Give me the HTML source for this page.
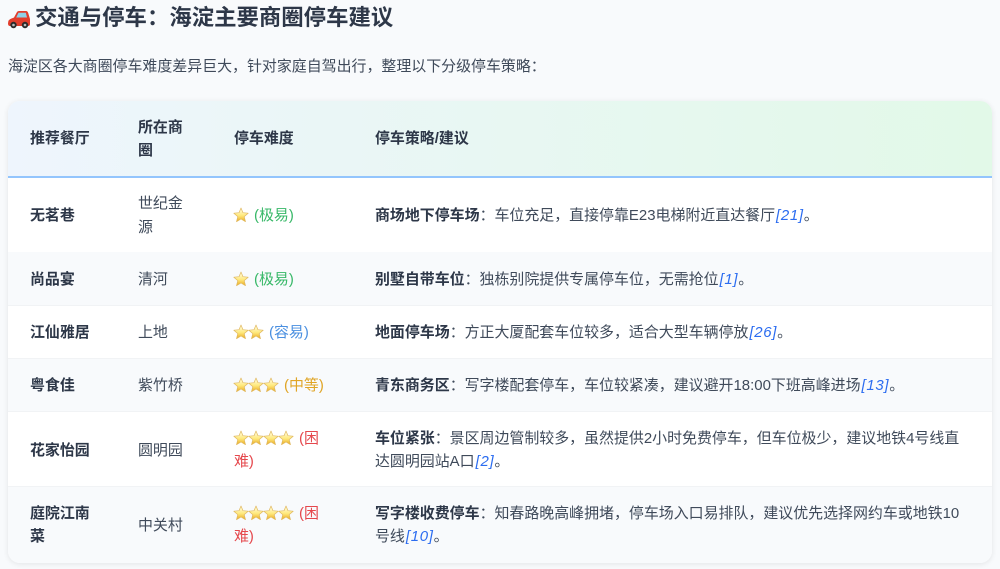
<!DOCTYPE html>
<html lang="zh"><head><meta charset="utf-8"><style>
html,body{margin:0;padding:0;width:1000px;height:569px;overflow:hidden;background:#f8fafc}
body{font-family:"Liberation Sans","Noto Sans CJK SC",sans-serif;font-size:14.95px;color:#3f4a5a;position:relative}
.t{position:absolute;white-space:nowrap;line-height:24px;margin-top:1px}
b,.b{font-weight:600;color:#2d3748}
.h{color:#2d3748;font-weight:600}
i{color:#2b6cf0;font-style:italic;letter-spacing:.7px;margin-left:1px}
#card{position:absolute;left:8px;top:101px;width:984px;height:462px;border-radius:12px;overflow:hidden;background:#fff;box-shadow:0 1px 6px rgba(0,0,0,.09)}
#head{position:absolute;left:0;top:0;width:984px;height:75px;background:linear-gradient(90deg,#eef5fd,#e2f9e8);border-bottom:2px solid #93c5fd}
.r{position:absolute;left:0;width:984px;box-sizing:border-box;border-bottom:1px solid #f1f3f5}
.s{position:absolute}
</style></head><body>
<svg class="s" style="left:7px;top:9px" width="24" height="20" viewBox="0 0 24 20"><path d="M1 14.500 Q1 10.500 4.500 9.500 Q6 9 7 8.500 L10 3 Q10.600 2 12 2 L19 2 Q20.500 2 21.200 4 L23 10 L23 15 Q23 17 21 17 L3 17 Q1 17 1 14.500Z" fill="#e23d2c"/><path d="M11.500 3.800 L18.800 3.800 L20 8.500 L9.200 8.500Z" fill="#8fd0e6"/><circle cx="6.500" cy="16" r="3.200" fill="#2b2b2b"/><circle cx="6.500" cy="16" r="1.300" fill="#bbb"/><circle cx="18" cy="16" r="3.200" fill="#2b2b2b"/><circle cx="18" cy="16" r="1.300" fill="#bbb"/></svg>
<div class="t" style="left:35px;top:1px;font-size:22.4px;line-height:32px;font-weight:600;color:#2d3748">交通与停车：海淀主要商圈停车建议</div>
<div class="t" style="left:8px;top:54px">海淀区各大商圈停车难度差异巨大，针对家庭自驾出行，整理以下分级停车策略：</div>
<div id="card">
<div id="head"></div>
<div class="r" style="top:77px;height:75px;background:#fff"></div>
<div class="r" style="top:151px;height:54px;background:#f8fafc"></div>
<div class="r" style="top:205px;height:53px;background:#fff"></div>
<div class="r" style="top:258px;height:53px;background:#f8fafc"></div>
<div class="r" style="top:311px;height:75px;background:#fff"></div>
<div class="r" style="top:386px;height:76px;background:#f8fafc;border:0"></div>
</div>
<svg width="0" height="0" style="position:absolute"><defs><linearGradient id="g" x1="0" y1="0" x2="0" y2="1"><stop offset="0" stop-color="#fffdea"/><stop offset=".55" stop-color="#ffe97c"/><stop offset="1" stop-color="#e8a820"/></linearGradient><symbol id="st" viewBox="0 0 16 16"><path d="M8 1 L10 5.700 L15.200 6.200 L11.200 9.600 L12.500 14.700 L8 12 L3.500 14.700 L4.800 9.600 L.8 6.200 L6 5.700Z" fill="url(#g)" stroke="#e0b860" stroke-width=".7" stroke-linejoin="round"/></symbol></defs></svg>

<div class="t h" style="left:30px;top:126px">推荐餐厅</div>
<div class="t h" style="left:138px;top:115px;line-height:23px">所在商<br>圈</div>
<div class="t h" style="left:234px;top:126px">停车难度</div>
<div class="t h" style="left:375px;top:126px">停车策略/建议</div>

<div class="t b" style="left:30px;top:203px">无茗巷</div>
<div class="t" style="left:138px;top:191px;line-height:24px">世纪金<br>源</div>
<svg class="s" style="left:233px;top:207px" width="16" height="16"><use href="#st"/></svg>
<div class="t" style="left:254px;top:203px;color:#38b868">(极易)</div>
<div class="t" style="left:375px;top:203px"><b>商场地下停车场</b>：车位充足，直接停靠E23电梯附近直达餐厅<i>[21]</i>。</div>

<div class="t b" style="left:30px;top:267px">尚品宴</div>
<div class="t" style="left:138px;top:267px">清河</div>
<svg class="s" style="left:233px;top:271px" width="16" height="16"><use href="#st"/></svg>
<div class="t" style="left:254px;top:267px;color:#38b868">(极易)</div>
<div class="t" style="left:375px;top:267px"><b>别墅自带车位</b>：独栋别院提供专属停车位，无需抢位<i>[1]</i>。</div>

<div class="t b" style="left:30px;top:320px">江仙雅居</div>
<div class="t" style="left:138px;top:320px">上地</div>
<svg class="s" style="left:233px;top:324px" width="16" height="16"><use href="#st"/></svg>
<svg class="s" style="left:248px;top:324px" width="16" height="16"><use href="#st"/></svg>
<div class="t" style="left:269px;top:320px;color:#4a8fe0">(容易)</div>
<div class="t" style="left:375px;top:320px"><b>地面停车场</b>：方正大厦配套车位较多，适合大型车辆停放<i>[26]</i>。</div>

<div class="t b" style="left:30px;top:373px">粤食佳</div>
<div class="t" style="left:138px;top:373px">紫竹桥</div>
<svg class="s" style="left:233px;top:377px" width="16" height="16"><use href="#st"/></svg>
<svg class="s" style="left:248px;top:377px" width="16" height="16"><use href="#st"/></svg>
<svg class="s" style="left:263px;top:377px" width="16" height="16"><use href="#st"/></svg>
<div class="t" style="left:284px;top:373px;color:#e0a526">(中等)</div>
<div class="t" style="left:375px;top:373px"><b>青东商务区</b>：写字楼配套停车，车位较紧凑，建议避开18:00下班高峰进场<i>[13]</i>。</div>

<div class="t b" style="left:30px;top:438px">花家怡园</div>
<div class="t" style="left:138px;top:438px">圆明园</div>
<svg class="s" style="left:233px;top:430px" width="16" height="16"><use href="#st"/></svg>
<svg class="s" style="left:248px;top:430px" width="16" height="16"><use href="#st"/></svg>
<svg class="s" style="left:263px;top:430px" width="16" height="16"><use href="#st"/></svg>
<svg class="s" style="left:278px;top:430px" width="16" height="16"><use href="#st"/></svg>
<div class="t" style="left:299px;top:426px;color:#e5484d">(困</div>
<div class="t" style="left:234px;top:449px;color:#e5484d">难)</div>
<div class="t" style="left:375px;top:426px"><b>车位紧张</b>：景区周边管制较多，虽然提供2小时免费停车，但车位极少，建议地铁4号线直</div>
<div class="t" style="left:375px;top:449px">达圆明园站A口<i>[2]</i>。</div>

<div class="t b" style="left:30px;top:501px;line-height:23px">庭院江南<br>菜</div>
<div class="t" style="left:138px;top:513px">中关村</div>
<svg class="s" style="left:233px;top:505px" width="16" height="16"><use href="#st"/></svg>
<svg class="s" style="left:248px;top:505px" width="16" height="16"><use href="#st"/></svg>
<svg class="s" style="left:263px;top:505px" width="16" height="16"><use href="#st"/></svg>
<svg class="s" style="left:278px;top:505px" width="16" height="16"><use href="#st"/></svg>
<div class="t" style="left:299px;top:501px;color:#e5484d">(困</div>
<div class="t" style="left:234px;top:524px;color:#e5484d">难)</div>
<div class="t" style="left:375px;top:501px"><b>写字楼收费停车</b>：知春路晚高峰拥堵，停车场入口易排队，建议优先选择网约车或地铁10</div>
<div class="t" style="left:375px;top:524px">号线<i>[10]</i>。</div>
</body></html>
